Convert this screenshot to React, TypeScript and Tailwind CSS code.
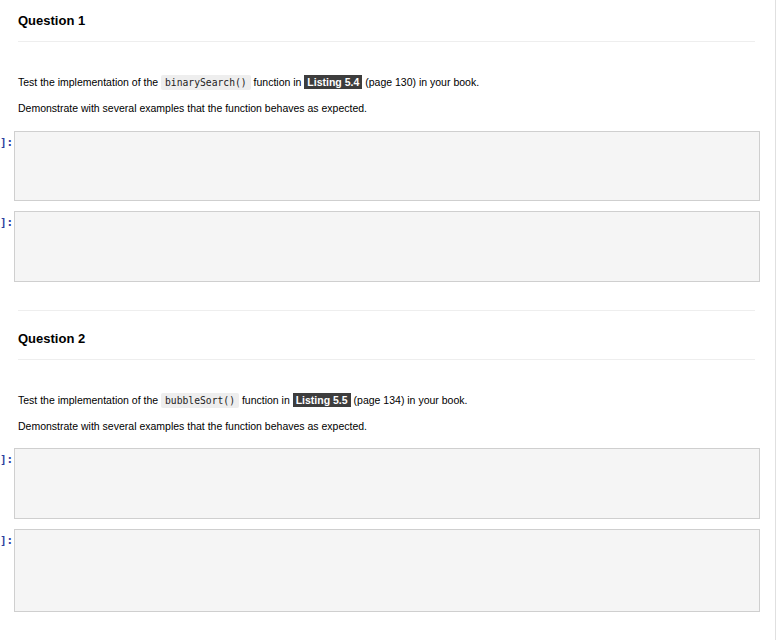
import React from "react";

const sans = { fontFamily: '"Liberation Sans", Arial, sans-serif' };

function Code({ children }: { children: React.ReactNode }) {
  return (
    <code className="bg-[#eeeeee] px-[4px] py-[2px] rounded-[2px] text-[9.7px] leading-none text-[#222]" style={{ fontFamily: '"DejaVu Sans Mono", monospace' }}>
      {children}
    </code>
  );
}

function Badge({ children }: { children: React.ReactNode }) {
  return (
    <span className="bg-[#3d3d3d] text-white font-bold px-[3px] py-[1px] leading-none">{children}</span>
  );
}

function CodeCell({ h, mt }: { h: string; mt: string }) {
  return (
    <div className={`flex ${mt}`}>
      <div className="w-[14px] shrink-0 pt-[5px] text-[11px] leading-[13px] font-bold text-[#303F9F] whitespace-nowrap overflow-hidden" style={{ fontFamily: '"DejaVu Sans Mono", monospace' }}>
        ]:
      </div>
      <div className={`w-[746px] ${h} bg-[#f5f5f5] border border-[#cfcfcf]`} />
    </div>
  );
}

function Section({ num, fn, listing, page, first }: { num: number; fn: string; listing: string; page: number; first?: boolean }) {
  return (
    <div className="pl-[18px] w-[755px]" style={sans}>
      <div className={`${first ? "pt-[12px]" : "pt-[19px]"} text-[13px] leading-[18px] font-bold text-black`}>Question {num}</div>
      <div className="mt-[11px] border-t border-[#eeeeee]" />
      <p className="mt-[32px] text-[10.5px] leading-[16px] text-black">
        Test the implementation of the <Code>{fn}</Code> function in <Badge>{listing}</Badge> (page {page}) in your book.
      </p>
      <p className="mt-[10px] text-[10.5px] leading-[16px] text-black">
        Demonstrate with several examples that the function behaves as expected.
      </p>
    </div>
  );
}

export default function App() {
  return (
    <div className="w-[777px] h-[640px] bg-white overflow-hidden relative">
      <div className="w-[776px] h-[640px] border-r border-[#e0e0e0]">
        <Section num={1} fn="binarySearch()" listing="Listing 5.4" page={130} first />
        <CodeCell h="h-[70px]" mt="mt-[15px]" />
        <CodeCell h="h-[71px]" mt="mt-[10px]" />
        <div className="ml-[18px] w-[737px] mt-[28px] border-t border-[#eeeeee]" />
        <Section num={2} fn="bubbleSort()" listing="Listing 5.5" page={134} />
        <CodeCell h="h-[71px]" mt="mt-[14px]" />
        <CodeCell h="h-[83px]" mt="mt-[10px]" />
      </div>
    </div>
  );
}
